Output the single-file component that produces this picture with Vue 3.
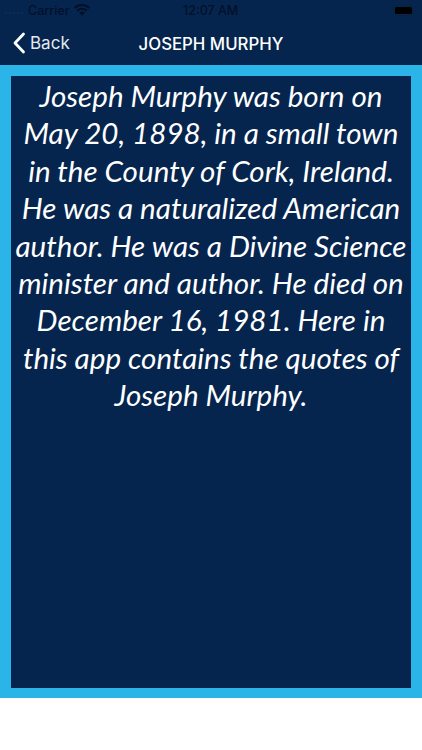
<script setup>
const bio = 'Joseph Murphy was born on May 20, 1898, in a small town in the County of Cork, Ireland. He was a naturalized American author. He was a Divine Science minister and author. He died on December 16, 1981. Here in this app contains the quotes of Joseph Murphy.'
</script>

<template>
  <div class="page">
    <header class="header">
      <div class="status">
        <div class="status-left">
          <span class="dots">
            <i v-for="n in 5" :key="n" class="dot"></i>
          </span>
          <span>Carrier</span>
          <svg class="wifi" viewBox="0 0 16 12" width="16" height="12">
            <path d="M8 11.8 5.2 8.8a4 4 0 0 1 5.6 0L8 11.8Z" fill="#021029"/>
            <path d="M3.9 7.4a6 6 0 0 1 8.2 0l1.4-1.5a8 8 0 0 0-11 0l1.4 1.5Z" fill="#021029"/>
            <path d="M1.4 4.8a9.4 9.4 0 0 1 13.2 0L16 3.3a11.4 11.4 0 0 0-16 0l1.4 1.5Z" fill="#021029"/>
          </svg>
        </div>
        <span class="time">12:07 AM</span>
        <div class="battery"><span class="battery-fill"></span></div>
      </div>
      <nav class="nav">
        <div class="back">
          <svg viewBox="0 0 14 22" width="14" height="22">
            <path d="M11.5 2 3 11l8.5 9" fill="none" stroke="#fff" stroke-width="2.8" stroke-linecap="round" stroke-linejoin="round"/>
          </svg>
          <span>Back</span>
        </div>
        <h1 class="title">JOSEPH MURPHY</h1>
      </nav>
    </header>
    <main class="frame">
      <p class="bio">{{ bio }}</p>
    </main>
  </div>
</template>

<style scoped>
.page {
  width: 422px;
  height: 750px;
  background: #fff;
  font-family: "Open Sans", "Liberation Sans", sans-serif;
  overflow: hidden;
}
.header {
  height: 65px;
  background: #05254e;
  box-sizing: border-box;
}
.status {
  position: relative;
  height: 20px;
  padding: 0 8px 0 5px;
  display: flex;
  align-items: center;
  justify-content: space-between;
  color: #021029;
  font-size: 12.5px;
  font-weight: 500;
  font-family: Inter, "Liberation Sans", sans-serif;
}
.status-left {
  display: flex;
  align-items: center;
  gap: 4px;
}
.dots {
  display: flex;
  gap: 2px;
  margin-top: 6px;
  width: 19px;
}
.dot {
  width: 2px;
  height: 2px;
  border-radius: 50%;
  background: #0f2f58;
}
.time {
  position: absolute;
  left: 183px;
  top: 3px;
}
.battery {
  width: 21px;
  height: 11px;
  border-radius: 3px;
  border: 1px solid #0a2140;
  box-sizing: border-box;
  padding: 1px;
}
.battery-fill {
  display: block;
  height: 100%;
  background: #000;
  border-radius: 1.5px;
}
.nav {
  position: relative;
  height: 45px;
  box-sizing: border-box;
  padding-top: 2px;
  display: flex;
  align-items: center;
  justify-content: center;
  color: #fff;
}
.back {
  position: absolute;
  left: 12px;
  top: 12px;
  display: flex;
  align-items: center;
  gap: 4px;
  font-size: 17px;
  font-family: Inter, "Liberation Sans", sans-serif;
  color: #e4e9f0;
}
.title {
  margin: 0;
  font-size: 16.8px;
  font-weight: 500;
  font-family: Inter, "Liberation Sans", sans-serif;
}
.frame {
  height: 633px;
  box-sizing: border-box;
  background: #05254e;
  border-style: solid;
  border-color: #2ab4e8;
  border-width: 11px 11px 10px 11px;
}
.bio {
  margin: 0;
  padding: 1px 0 0;
  color: #fff;
  text-align: center;
  font-family: Lato, "Open Sans", sans-serif;
  font-style: italic;
  font-size: 29.6px;
  line-height: 37.4px;
}
</style>
